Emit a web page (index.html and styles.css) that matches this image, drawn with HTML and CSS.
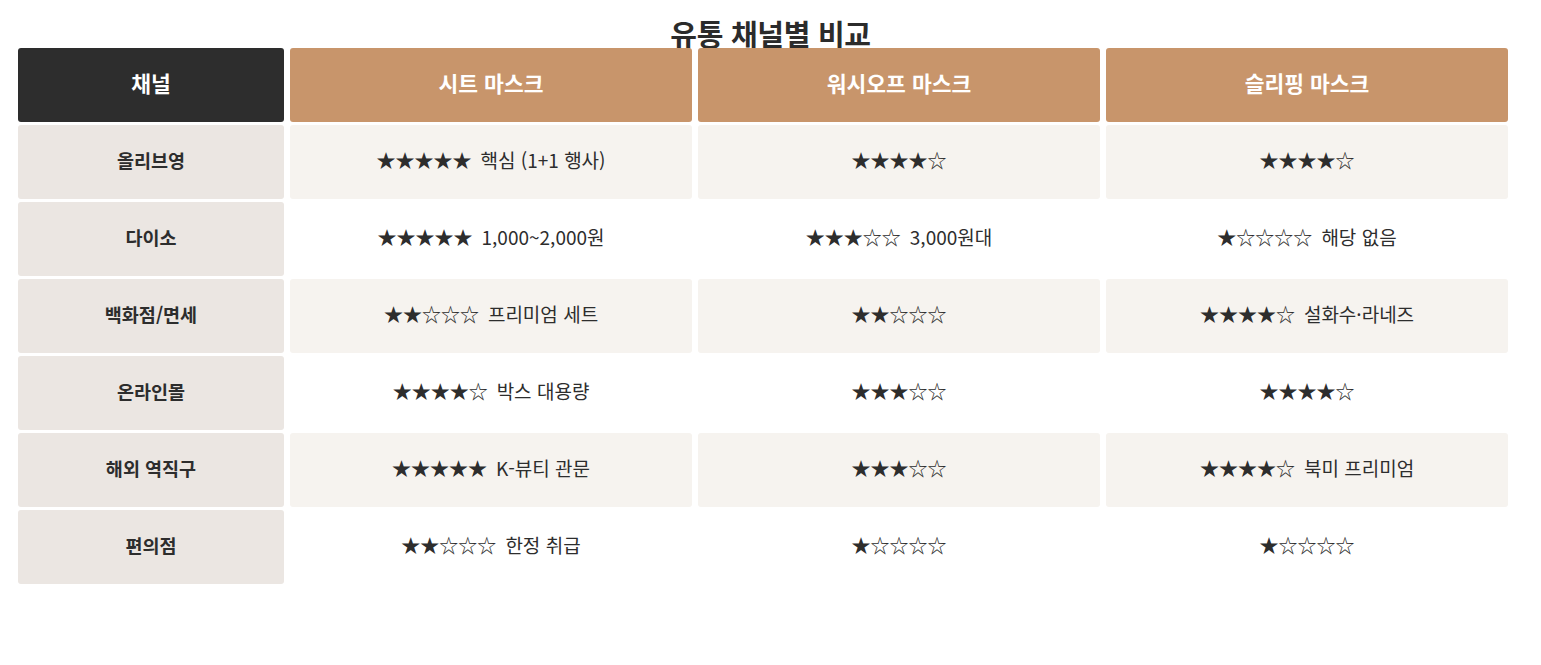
FILE: index.html
```html
<!DOCTYPE html>
<html lang="ko">
<head>
<meta charset="utf-8">
<link rel="stylesheet" href="styles.css">
</head>
<body>
<h1 class="title">유통 채널별 비교</h1>
<div class="table">
  <div class="cell head head-dark">채널</div>
  <div class="cell head">시트 마스크</div>
  <div class="cell head">워시오프 마스크</div>
  <div class="cell head">슬리핑 마스크</div>

  <div class="cell label">올리브영</div>
  <div class="cell odd"><span class="stars">★★★★★</span><span class="note">핵심 (1+1 행사)</span></div>
  <div class="cell odd"><span class="stars">★★★★☆</span></div>
  <div class="cell odd"><span class="stars">★★★★☆</span></div>

  <div class="cell label">다이소</div>
  <div class="cell even"><span class="stars">★★★★★</span><span class="note">1,000~2,000원</span></div>
  <div class="cell even"><span class="stars">★★★☆☆</span><span class="note">3,000원대</span></div>
  <div class="cell even"><span class="stars">★☆☆☆☆</span><span class="note">해당 없음</span></div>

  <div class="cell label">백화점/면세</div>
  <div class="cell odd"><span class="stars">★★☆☆☆</span><span class="note">프리미엄 세트</span></div>
  <div class="cell odd"><span class="stars">★★☆☆☆</span></div>
  <div class="cell odd"><span class="stars">★★★★☆</span><span class="note">설화수·라네즈</span></div>

  <div class="cell label">온라인몰</div>
  <div class="cell even"><span class="stars">★★★★☆</span><span class="note">박스 대용량</span></div>
  <div class="cell even"><span class="stars">★★★☆☆</span></div>
  <div class="cell even"><span class="stars">★★★★☆</span></div>

  <div class="cell label">해외 역직구</div>
  <div class="cell odd"><span class="stars">★★★★★</span><span class="note">K-뷰티 관문</span></div>
  <div class="cell odd"><span class="stars">★★★☆☆</span></div>
  <div class="cell odd"><span class="stars">★★★★☆</span><span class="note">북미 프리미엄</span></div>

  <div class="cell label">편의점</div>
  <div class="cell even"><span class="stars">★★☆☆☆</span><span class="note">한정 취급</span></div>
  <div class="cell even"><span class="stars">★☆☆☆☆</span></div>
  <div class="cell even"><span class="stars">★☆☆☆☆</span></div>
</div>
</body>
</html>
```

FILE: styles.css
```css
html, body {
  margin: 0;
  padding: 0;
  background: #ffffff;
}

body {
  font-family: "Noto Sans CJK KR", "Noto Sans", sans-serif;
  color: #2d2d2d;
  padding: 18px 0 0 18px;
}

.title {
  margin: 0 0 0 -18px;
  height: 30px;
  font-size: 29px;
  line-height: 30px;
  font-weight: 700;
  text-align: center;
  color: #2b2b2b;
  letter-spacing: -0.3px;
}

.table {
  display: grid;
  grid-template-columns: 266px 402px 402px 402px;
  grid-auto-rows: 74px;
  column-gap: 6px;
  row-gap: 3px;
}

.cell {
  display: flex;
  align-items: center;
  justify-content: center;
  border-radius: 3px;
  font-size: 19px;
  line-height: 24px;
  padding-bottom: 5px;
  box-sizing: border-box;
  white-space: nowrap;
}

.head {
  background: #c8956b;
  color: #ffffff;
  font-weight: 700;
  font-size: 21.5px;
}

.head-dark {
  background: #2d2d2d;
}

.label {
  background: #ebe6e2;
  font-weight: 700;
  font-size: 18.5px;
  color: #2d2d2d;
}

.odd {
  background: #f6f3ef;
}

.even {
  background: #ffffff;
}

.stars {
  font-family: "Noto Sans CJK KR", sans-serif;
  color: #2d2d2d;
}

.note {
  margin-left: 9px;
}
```
